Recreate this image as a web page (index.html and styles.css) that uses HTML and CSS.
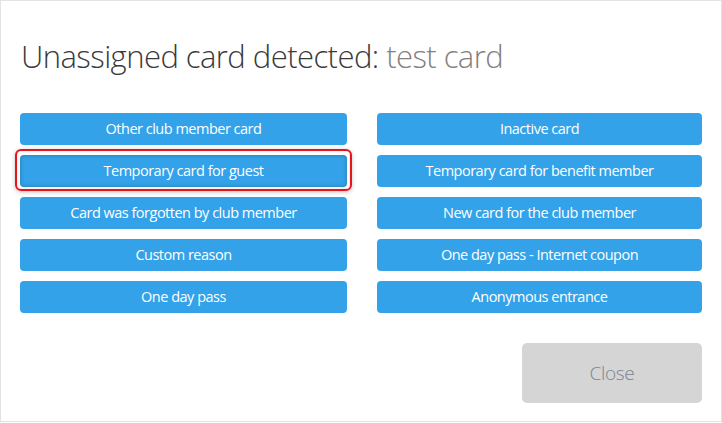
FILE: index.html
```html
<!DOCTYPE html>
<html>
<head>
<meta charset="utf-8">
<link rel="stylesheet" href="styles.css">
</head>
<body>
<div class="dialog">
  <h1 class="title">Unassigned card detected: <span class="card-name">test card</span></h1>
  <div class="options">
    <button class="opt">Other club member card</button>
    <button class="opt">Inactive card</button>
    <button class="opt highlighted">Temporary card for guest</button>
    <button class="opt">Temporary card for benefit member</button>
    <button class="opt">Card was forgotten by club member</button>
    <button class="opt">New card for the club member</button>
    <button class="opt">Custom reason</button>
    <button class="opt">One day pass - Internet coupon</button>
    <button class="opt">One day pass</button>
    <button class="opt">Anonymous entrance</button>
  </div>
  <div class="footer">
    <button class="close">Close</button>
  </div>
</div>
</body>
</html>
```

FILE: styles.css
```css
html, body {
  margin: 0;
  padding: 0;
  background: #ffffff;
}
.dialog {
  box-sizing: border-box;
  width: 722px;
  height: 422px;
  border: 1px solid #e3e3e3;
  padding: 33px 19px 0 19px;
  font-family: "Open Sans", sans-serif;
}
.title {
  margin: 0 0 0 1px;
  font-size: 31px;
  font-weight: 300;
  line-height: 44px;
  letter-spacing: -0.55px;
  color: #3a3a3a;
}
.card-name {
  color: #85807c;
}
.options {
  margin-top: 35px;
  display: grid;
  grid-template-columns: 327px 325px;
  column-gap: 30px;
  row-gap: 10px;
}
.opt {
  position: relative;
  box-sizing: border-box;
  height: 32px;
  border: 0;
  border-radius: 4px;
  background: #33a2e8;
  color: #ffffff;
  font-family: "Open Sans", sans-serif;
  font-size: 14.5px;
  font-weight: 400;
  letter-spacing: -0.5px;
  padding: 0 0 2px 0;
  text-align: center;
}
.opt.highlighted {
  box-shadow: inset 0 0 4px rgba(0, 0, 0, 0.25);
}
.opt.highlighted::after {
  content: "";
  position: absolute;
  left: -5px;
  right: -5px;
  top: -6px;
  bottom: -4px;
  border: 2px solid #e8141c;
  border-radius: 6px;
  box-shadow: 0 1px 4px rgba(0, 0, 0, 0.25), inset 0 0 2px rgba(0, 0, 0, 0.15);
}
.footer {
  margin-top: 30px;
  display: flex;
  justify-content: flex-end;
}
.close {
  width: 180px;
  height: 60px;
  border: 0;
  border-radius: 5px;
  background: #d5d5d5;
  color: #7a8492;
  font-family: "Open Sans", sans-serif;
  font-size: 19px;
  font-weight: 300;
  letter-spacing: -0.3px;
  padding: 0;
}
```
